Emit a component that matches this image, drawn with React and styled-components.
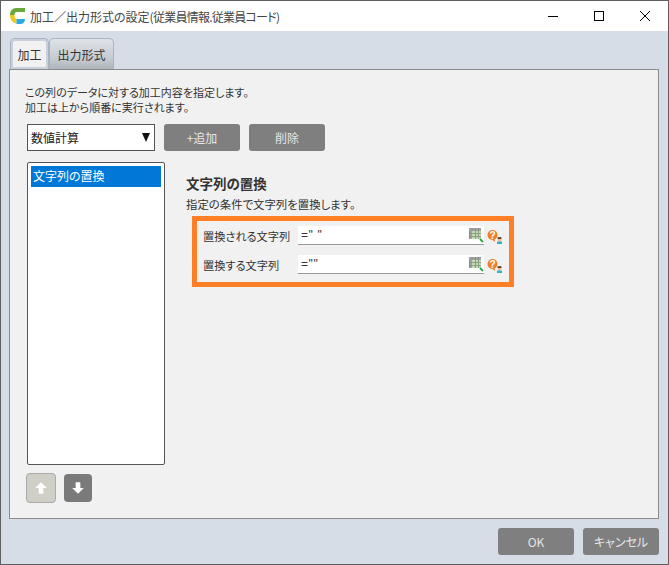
import React from 'react';
import styled, { createGlobalStyle } from 'styled-components';

const Global = createGlobalStyle`
  html, body { margin: 0; padding: 0; background: #d7dde6; }
  * { box-sizing: border-box; }
`;

const Win = styled.div`
  width: 669px;
  height: 565px;
  display: flex;
  flex-direction: column;
  background: #d7dde6;
  border: 1px solid #5f5f5f;
  font-family: "Noto Sans CJK JP", "Noto Sans", sans-serif;
  font-feature-settings: "palt" 1;
  font-size: 12px;
  color: #333;
  overflow: hidden;
`;

const TitleBar = styled.div`
  height: 30px;
  flex: none;
  background: #fff;
  display: flex;
  align-items: center;
  padding-left: 9px;
`;

const Title = styled.div`
  margin-left: 5px;
  font-size: 12px;
  color: #444;
  flex: 1;
`;

const WinBtn = styled.div`
  width: 46px;
  height: 30px;
  display: flex;
  align-items: center;
  justify-content: center;
`;

const Body = styled.div`
  flex: 1;
  display: flex;
  flex-direction: column;
  padding: 7px 9px 0 8px;
`;

const Tabs = styled.div`
  display: flex;
  height: 31px;
  padding-left: 1px;
`;

const Tab = styled.div`
  height: 31px;
  width: ${p => (p.$active ? 39 : 65)}px;
  display: flex;
  align-items: center;
  justify-content: center;
  font-size: 12px;
  color: #333;
  border: 1px solid #a9b3c2;
  border-bottom: none;
  border-radius: 5px 5px 0 0;
  background: ${p =>
    p.$active ? '#f1f1f1' : 'linear-gradient(#dfe3e8, #c3c9cf 70%, #aeb4ba)'};
  ${p => p.$active && 'box-shadow: inset 0 0 0 2px #c9d0dc;'}
`;

const Panel = styled.div`
  height: 450px;
  background: #f1f1f1;
  border: 1px solid #8c8c8c;
  padding: 15px 14px 0 15px;
  display: flex;
  flex-direction: column;
`;

const Intro = styled.div`
  line-height: 15px;
  font-size: 11px;
  color: #333;
`;

const Toolbar = styled.div`
  display: flex;
  align-items: center;
  margin-top: 9px;
  margin-left: 2px;
`;

const Select = styled.div`
  width: 128px;
  height: 27px;
  background: #fff;
  border: 1px solid #555;
  display: flex;
  align-items: center;
  justify-content: space-between;
  padding: 0 4px 0 3px;
  font-size: 12px;
  color: #222;
  margin-right: 9px;
`;

const Caret = styled.span`
  width: 0;
  height: 0;
  border-left: 4.5px solid transparent;
  border-right: 4.5px solid transparent;
  border-top: 9px solid #111;
`;

const GrayBtn = styled.div`
  width: 76px;
  height: 27px;
  margin-right: ${p => p.$mr || 0}px;
  background: #7f7f7f;
  color: #e6e6e6;
  border-radius: 3px;
  display: flex;
  align-items: center;
  justify-content: center;
  font-size: 12px;
`;

const Main = styled.div`
  display: flex;
  margin-top: 11px;
`;

const Left = styled.div`
  width: 138px;
  margin-left: 2px;
  display: flex;
  flex-direction: column;
`;

const ListBox = styled.div`
  height: 303px;
  background: #fff;
  border: 1px solid #555;
  border-radius: 2px;
  padding: 3px;
`;

const ListItem = styled.div`
  height: 21px;
  background: #0078d7;
  color: #fff;
  font-size: 12px;
  line-height: 20px;
  padding-left: 2px;
`;

const Arrows = styled.div`
  display: flex;
  align-items: center;
  gap: 8px;
  margin: 8px 0 0 -1px;
`;

const ArrowBtn = styled.div`
  width: ${p => (p.$disabled ? 30 : 28)}px;
  height: ${p => (p.$disabled ? 30 : 28)}px;
  border-radius: 4px;
  display: flex;
  align-items: center;
  justify-content: center;
  background: ${p => (p.$disabled ? '#cfcfc8' : '#7a7a7a')};
  border: ${p => (p.$disabled ? '1px solid #aaa' : 'none')};
`;

const Detail = styled.div`
  margin-left: 21px;
  padding-top: 12px;
  flex: 1;
`;

const Heading = styled.div`
  font-size: 13.5px;
  font-weight: 700;
  color: #333;
  line-height: 18px;
`;

const Desc = styled.div`
  font-size: 11.4px;
  line-height: 15px;
  margin-top: 5px;
  color: #333;
`;

const Highlight = styled.div`
  width: 322px;
  height: 71px;
  margin: 4px 0 0 6px;
  border: 5px solid #ff7f27;
  padding: 5px 0 0 6px;
  display: flex;
  flex-direction: column;
  gap: 10px;
`;

const Row = styled.div`
  display: flex;
  align-items: center;
  height: 19px;
`;

const Label = styled.div`
  width: 95px;
  font-size: 11.2px;
  color: #333;
`;

const Input = styled.div`
  width: 186px;
  height: 19px;
  background: #fff;
  border-bottom: 1px solid #999;
  display: flex;
  align-items: center;
  justify-content: space-between;
  padding: 0 0 0 3px;
  font-family: "Liberation Sans", Arial, sans-serif;
  font-size: 12px;
  letter-spacing: 0.6px;
  color: #333;
  white-space: pre;
`;

const Footer = styled.div`
  flex: 1;
  display: flex;
  justify-content: flex-end;
  align-items: flex-start;
  gap: 9px;
  padding-top: 9px;
`;

const TableIcon = () => (
  <svg width="15" height="16" viewBox="0 0 15 16">
    <rect x="0" y="1" width="12" height="11" fill="#a3a3a3" />
    <rect x="3" y="4" width="9" height="8" fill="#bfe0ae" />
    <path d="M6.5 4v8M9.5 4v8M3 6.5h9M3 9.5h9" stroke="#8f9c88" strokeWidth="1" />
    <path d="M0.5 4v8M0.5 6.5h2.5M0.5 9.5h2.5M3 1v3M6.5 1v3M9.5 1v3" stroke="#8a8a8a" strokeWidth="1" />
    <path d="M11 12l3 3" stroke="#2ea84a" strokeWidth="2" />
  </svg>
);

const HelpIcon = () => (
  <svg width="16" height="16" viewBox="0 0 16 16" style={{ marginLeft: 3, marginTop: 5 }}>
    <circle cx="5.5" cy="5" r="5" fill="#ee7f2d" />
    <path d="M4 9l4 3-0.5-4z" fill="#ee7f2d" />
    <text x="5.5" y="8.6" textAnchor="middle" fontSize="10" fontWeight="700" fill="#fff" fontFamily="Liberation Sans">?</text>
    <circle cx="12.5" cy="9.5" r="1.9" fill="#edbb96" />
    <path d="M10.6 9V7.2h3.8V9z" fill="#5a3d22" />
    <path d="M10 11.5h5V14h-5z" fill="#35b0c2" />
  </svg>
);

const Logo = () => (
  <svg width="15" height="16" viewBox="0 0 15 16">
    <path d="M15 0H6C2.5 0 0 3 0 7h4.5c0-1.800.8-3 2.500-3H15z" fill="#6aa83c" />
    <path d="M0 7c0 4.500 2.500 8 6.500 8.500V11C5 11 4.500 9 4.500 7z" fill="#f6c51f" />
    <path d="M6.500 11H15c0 3-2 5-5 5H6.500z" fill="#2aa9e8" />
  </svg>
);

const Narrow = styled.span`
  letter-spacing: -0.75px;
`;

const Fields = [
  { label: '置換される文字列', value: '=" "' },
  { label: '置換する文字列', value: '=""' },
];

export default function App() {
  return (
    <>
      <Global />
      <Win>
        <TitleBar>
          <Logo />
          <Title>加工／出力形式の設定<Narrow>(従業員情報.従業員コード)</Narrow></Title>
          <WinBtn>
            <svg width="10" height="10"><path d="M0 5.500h10" stroke="#000" /></svg>
          </WinBtn>
          <WinBtn>
            <svg width="10" height="10"><rect x=".5" y=".5" width="9" height="9" fill="none" stroke="#000" /></svg>
          </WinBtn>
          <WinBtn>
            <svg width="10" height="10"><path d="M0 0l10 10M10 0L0 10" stroke="#000" /></svg>
          </WinBtn>
        </TitleBar>
        <Body>
          <Tabs>
            <Tab $active>加工</Tab>
            <Tab>出力形式</Tab>
          </Tabs>
          <Panel>
            <Intro>
              この列のデータに対する加工内容を指定します。
              <br />
              加工は上から順番に実行されます。
            </Intro>
            <Toolbar>
              <Select>
                数値計算
                <Caret />
              </Select>
              <GrayBtn $mr={9}>+追加</GrayBtn>
              <GrayBtn>削除</GrayBtn>
            </Toolbar>
            <Main>
              <Left>
                <ListBox>
                  <ListItem>文字列の置換</ListItem>
                </ListBox>
                <Arrows>
                  <ArrowBtn $disabled>
                    <svg width="14" height="14" viewBox="0 0 12 12"><path d="M6 1l5 5H8v5H4V6H1z" fill="#fff" /></svg>
                  </ArrowBtn>
                  <ArrowBtn>
                    <svg width="14" height="14" viewBox="0 0 12 12"><path d="M6 11l5-5H8V1H4v5H1z" fill="#fff" /></svg>
                  </ArrowBtn>
                </Arrows>
              </Left>
              <Detail>
                <Heading>文字列の置換</Heading>
                <Desc>指定の条件で文字列を置換します。</Desc>
                <Highlight>
                  {Fields.map(f => (
                    <Row key={f.label}>
                      <Label>{f.label}</Label>
                      <Input>
                        {f.value}
                        <TableIcon />
                      </Input>
                      <HelpIcon />
                    </Row>
                  ))}
                </Highlight>
              </Detail>
            </Main>
          </Panel>
          <Footer>
            <GrayBtn>OK</GrayBtn>
            <GrayBtn>キャンセル</GrayBtn>
          </Footer>
        </Body>
      </Win>
    </>
  );
}
